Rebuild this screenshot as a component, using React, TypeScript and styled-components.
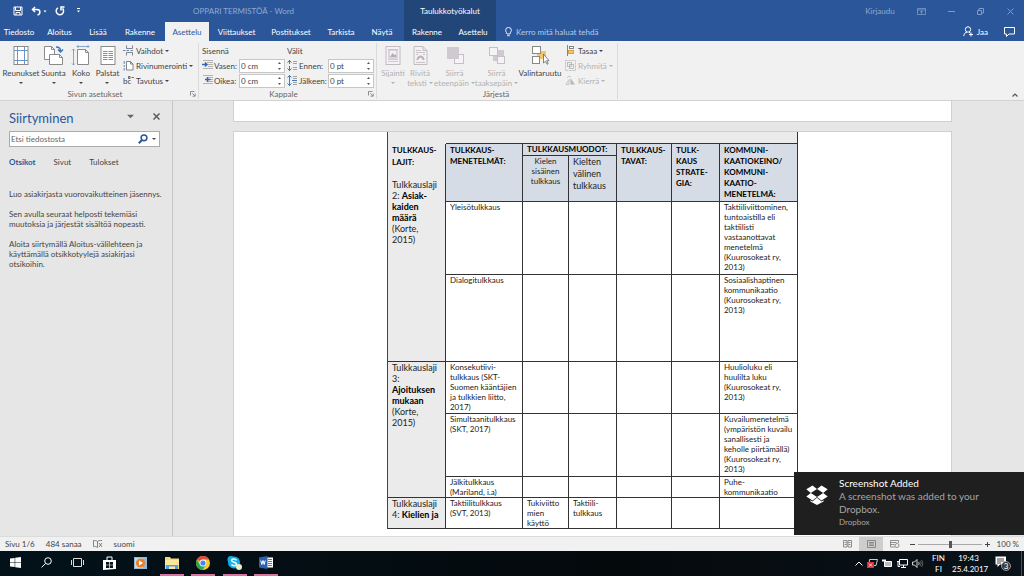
import React from "react";
import styled, { createGlobalStyle } from "styled-components";

const UI = `Lato, "Open Sans", sans-serif`;

const Global = createGlobalStyle`
  * { box-sizing: border-box; }
  html, body { margin: 0; padding: 0; }
  body { font-family: ${UI}; font-size: 8px; line-height: 10px; color: #444; overflow: hidden; }
  button, input { font: inherit; color: inherit; margin: 0; padding: 0; border: 0; background: none; }
  h1, h2, p { margin: 0; font-weight: 400; }
  svg { display: block; flex: none; }
`;

const Window = styled.div`
  display: flex;
  flex-direction: column;
  height: 100vh;
  background: #e6e6e6;
`;

/* ---------- Title bar and tabs ---------- */

const Header = styled.header`
  display: flex;
  height: 41px;
  flex: none;
  background: #2b579a;
  color: #fff;
`;

const HeaderMain = styled.div`
  display: flex;
  flex-direction: column;
  width: 404px;
  flex: none;
`;

const ContextArea = styled.div`
  display: flex;
  flex-direction: column;
  width: 92px;
  flex: none;
  background: #224678;
`;

const HeaderRest = styled.div`
  display: flex;
  flex-direction: column;
  flex: 1;
  min-width: 0;
`;

const TitleRow = styled.div<{ $end?: boolean; $center?: boolean }>`
  display: flex;
  height: 22px;
  flex: none;
  align-items: center;
  justify-content: ${(p) => (p.$end ? "flex-end" : p.$center ? "center" : "flex-start")};
  padding-right: ${(p) => (p.$end ? 4 : 0)}px;
  color: ${(p) => (p.$center ? "#fff" : "#8fa9d0")};
`;

const QuickAccess = styled.div`
  display: flex;
  align-items: center;
  gap: 8px;
  padding: 0 0 0 13px;
  flex: 1;
  color: #fff;
`;

const DocTitle = styled.h1`
  font-size: 8px;
  line-height: 10px;
  padding-right: 110px;
  white-space: pre;
`;

const IconButton = styled.button<{ $w?: number }>`
  display: flex;
  align-items: center;
  justify-content: center;
  width: ${(p) => (p.$w ? `${p.$w}px` : "auto")};
  flex: none;
`;

const Tabs = styled.nav`
  display: flex;
  height: 19px;
  align-items: stretch;
`;

const Tab = styled.button<{ $w: number; $active?: boolean }>`
  width: ${(p) => p.$w}px;
  flex: none;
  text-align: center;
  white-space: nowrap;
  background: ${(p) => (p.$active ? "#f1f1f1" : "transparent")};
  color: ${(p) => (p.$active ? "#2b579a" : "#fff")};
`;

const TellMe = styled.button`
  display: flex;
  align-items: center;
  gap: 4px;
  padding-left: 9px;
  color: #b9cae6;
  flex: 1;
`;

const ShareButton = styled.button`
  display: flex;
  align-items: center;
  gap: 4px;
  padding-right: 8px;
`;

/* ---------- Ribbon ---------- */

const Ribbon = styled.section`
  display: flex;
  height: 60px;
  flex: none;
  background: #f1f1f1;
  border-bottom: 1px solid #d2d2d2;
  padding: 2px 0 1px;
`;

const Group = styled.div<{ $w: number }>`
  display: flex;
  flex-direction: column;
  width: ${(p) => p.$w}px;
  flex: none;
  border-right: 1px solid #dadada;
`;

const GroupBody = styled.div`
  display: flex;
  height: 47px;
  padding-left: 3px;
`;

const GroupFoot = styled.div`
  display: flex;
  height: 10px;
  align-items: center;
  padding-right: 2px;
  color: #666;
`;

const GroupName = styled.span`
  flex: 1;
  text-align: center;
`;

const BigButton = styled.button<{ $w: number }>`
  display: flex;
  flex-direction: column;
  align-items: center;
  width: ${(p) => p.$w}px;
  flex: none;
  padding-top: 2px;
  white-space: nowrap;
  &:disabled { color: #b1b1b1; }
`;

const BigLabel = styled.span`
  margin-top: 2px;
  display: flex;
  flex-direction: column;
  align-items: center;
`;

const LastLine = styled.span`
  display: flex;
  align-items: center;
  justify-content: center;
  gap: 2px;
  height: 10px;
`;

const SmallColumn = styled.div<{ $pad: number }>`
  display: flex;
  flex-direction: column;
  padding-left: ${(p) => p.$pad}px;
`;

const SmallButton = styled.button`
  display: flex;
  align-items: center;
  gap: 2px;
  height: 15px;
  white-space: nowrap;
  &:disabled { color: #b1b1b1; }
`;

const FieldColumn = styled.div<{ $w: number }>`
  display: flex;
  flex-direction: column;
  width: ${(p) => p.$w}px;
  flex: none;
`;

const FieldTitle = styled.div`
  height: 15px;
  padding-top: 3px;
`;

const FieldRow = styled.div`
  display: flex;
  align-items: center;
  height: 15px;
  gap: 1px;
  padding-right: 2px;
`;

const FieldLabel = styled.label`
  flex: 1;
  min-width: 0;
  white-space: nowrap;
`;

const Spin = styled.div`
  display: flex;
  flex: none;
  align-items: center;
  width: 46px;
  height: 14px;
  background: #fff;
  border: 1px solid #c6c6c6;
  padding-right: 2px;
  input { width: 37px; padding-left: 1px; outline: none; }
`;

const Collapse = styled.div`
  display: flex;
  flex: 1;
  justify-content: flex-end;
  align-items: flex-end;
  padding: 0 6px 2px 0;
`;

/* ---------- Workspace ---------- */

const Workspace = styled.main`
  display: flex;
  flex: 1;
  min-height: 0;
`;

const Pane = styled.aside`
  width: 173px;
  flex: none;
  border-right: 1px solid #c6c6c6;
  padding: 9px 12px 0 9px;
`;

const PaneHead = styled.div`
  display: flex;
  align-items: flex-start;
  height: 21px;
`;

const PaneTitle = styled.h2`
  flex: 1;
  font-size: 13px;
  line-height: 16px;
  color: #2b579a;
`;

const PaneTools = styled.div`
  display: flex;
  align-items: center;
  gap: 19px;
  height: 13px;
`;

const SearchBox = styled.div`
  display: flex;
  align-items: center;
  gap: 4px;
  height: 16px;
  background: #fff;
  border: 1px solid #ababab;
  padding-right: 3px;
  input { flex: 1; min-width: 0; padding-left: 1px; outline: none; }
  input::placeholder { color: #666; opacity: 1; }
`;

const PaneTabs = styled.div`
  display: flex;
  gap: 18px;
  margin: 10px 0 22px;
`;

const PaneTab = styled.button<{ $active?: boolean }>`
  font-weight: ${(p) => (p.$active ? 700 : 400)};
  color: ${(p) => (p.$active ? "#2b579a" : "#444")};
`;

const PaneText = styled.p`
  margin-bottom: 10px;
  white-space: nowrap;
`;

const DocArea = styled.div`
  display: flex;
  flex-direction: column;
  align-items: center;
  flex: 1;
  min-width: 0;
  overflow: hidden;
  padding-right: 12px;
`;

const PreviousPage = styled.div`
  width: 719px;
  height: 21px;
  flex: none;
  background: #fff;
  border: 1px solid #d0d0d0;
  border-top: 0;
  margin-bottom: 9px;
`;

const Page = styled.div`
  width: 719px;
  flex: 1;
  min-height: 0;
  overflow: hidden;
  background: #fff;
  border: 1px solid #d0d0d0;
  border-bottom: 0;
  display: flex;
  justify-content: center;
  align-items: flex-start;
`;

const DocTable = styled.table`
  table-layout: fixed;
  width: 411px;
  flex: none;
  border-collapse: separate;
  border-spacing: 0;
  border-left: 1px solid #444;
  color: #222;
  th, td {
    border-right: 1px solid #333;
    border-bottom: 1px solid #333;
    padding: 0 0 0 4px;
    vertical-align: top;
    text-align: left;
    font-weight: 400;
    white-space: nowrap;
  }
`;

const Row = styled.tr<{ $h: number }>`
  height: ${(p) => p.$h}px;
`;

const StripStart = styled.td`
  background: #ebebeb;
  && { border-right: 0; border-bottom: 0; }
`;

const Strip = styled.td`
  background: #ebebeb;
`;

const HeadCell = styled.th`
  background: #d6dce5;
  color: #000;
  line-height: 11px;
  && { font-weight: 700; padding-top: ${(p) => (p.rowSpan ? 1 : 0)}px; }
`;

const SubCell = styled.th<{ $large?: boolean }>`
  background: #d6dce5;
  font-size: ${(p) => (p.$large ? 9 : 8)}px;
  line-height: ${(p) => (p.$large ? 12 : 10)}px;
  && { text-align: ${(p) => (p.$large ? "left" : "center")}; padding-left: ${(p) => (p.$large ? 4 : 0)}px; }
`;

const SideCell = styled.th`
  background: #ebebeb;
  font-size: 9px;
  line-height: 11px;
  b { color: #000; }
`;

const SideTitle = styled.b`
  display: block;
  font-size: 8px;
  line-height: 12px;
  margin-bottom: 11px;
`;

/* ---------- Status bar ---------- */

const StatusBar = styled.footer`
  display: flex;
  align-items: center;
  height: 15px;
  flex: none;
  background: #f1f1f1;
  border-top: 1px solid #dcdcdc;
  padding: 0 5px;
`;

const StatusLeft = styled.div`
  display: flex;
  align-items: center;
  gap: 11px;
  flex: 1;
`;

const ViewButton = styled.button<{ $on?: boolean }>`
  display: flex;
  align-items: center;
  justify-content: center;
  width: 24px;
  height: 14px;
  background: ${(p) => (p.$on ? "#cdcdcd" : "transparent")};
`;

const Zoom = styled.div`
  display: flex;
  align-items: center;
  gap: 3px;
  padding-left: 3px;
`;

const Slider = styled.input`
  appearance: none;
  width: 64px;
  height: 12px;
  background: linear-gradient(#a8a8a8, #a8a8a8) center / 100% 1px no-repeat;
  &::-webkit-slider-thumb {
    appearance: none;
    width: 3px;
    height: 7px;
    background: #555;
  }
`;

const Percent = styled.span`
  width: 26px;
  text-align: right;
  white-space: nowrap;
`;

/* ---------- Taskbar ---------- */

const Taskbar = styled.div`
  display: flex;
  justify-content: space-between;
  height: 25px;
  flex: none;
  background: linear-gradient(90deg, #03121a, #04090c 60%, #0a1319);
  color: #fff;
`;

const Apps = styled.div`
  display: flex;
  justify-content: space-between;
  width: 278px;
  padding-left: 3px;
`;

const AppButton = styled.button<{ $open?: boolean }>`
  display: flex;
  align-items: center;
  justify-content: center;
  width: 24px;
  border-bottom: 2px solid ${(p) => (p.$open ? "#d9739f" : "transparent")};
`;

const Tray = styled.div`
  display: flex;
  align-items: center;
  gap: 4px;
`;

const TrayText = styled.div<{ $w: number }>`
  width: ${(p) => p.$w}px;
  text-align: center;
  line-height: 11px;
`;

const Notice = styled.button`
  display: flex;
  align-items: center;
  justify-content: center;
  width: 28px;
  height: 25px;
`;

const ShowDesktop = styled.button`
  width: 3px;
  height: 25px;
  border-left: 1px solid #4a5257;
`;

/* ---------- Toast ---------- */

const Toast = styled.aside`
  position: absolute;
  right: 0;
  bottom: 41px;
  display: flex;
  gap: 11px;
  width: 230px;
  height: 63px;
  padding: 5px 12px;
  background: #1f1f1f;
  color: #a5a5a5;
  font-size: 10px;
  line-height: 13px;
`;

const ToastLogo = styled.div`
  padding-top: 8px;
`;

const ToastTitle = styled.h2`
  font-size: 10px;
  line-height: 13px;
  color: #fff;
`;

const ToastSource = styled.p`
  font-size: 8px;
  line-height: 13px;
`;

/* ---------- Small drawings ---------- */

const Caret = ({ s = 4, c = "currentColor" }: { s?: number; c?: string }) => (
  <svg width={s} height={s} viewBox="0 0 4 4"><path d="M0 1h4L2 3z" fill={c} /></svg>
);

const SpinArrows = () => (
  <svg width="5" height="10" viewBox="0 0 5 10"><path d="M1 3h3L2.500 1zM1 7h3L2.500 9z" fill="#555" /></svg>
);

const Launcher = () => (
  <svg width="6" height="6" viewBox="0 0 6 6" fill="none" stroke="#777" strokeWidth=".8"><path d="M.5 4.500v-4h4M2.300 2.300l2.500 2.500M5.200 2.500v2.700H2.500" /></svg>
);

const Big = ({ children }: { children: React.ReactNode }) => (
  <svg width="20" height="21" viewBox="0 0 20 21" fill="none" strokeWidth="1">{children}</svg>
);

const Margins = () => (
  <Big><rect x="3" y="1.500" width="14" height="18" fill="#fff" stroke="#8a8a8a" /><path d="M6.500 2v17M13.500 2v17M3 5.500h14M3 15.500h14" stroke="#6a93c8" /></Big>
);
const Orientation = () => (
  <Big>
    <path d="M.5 1.500h7l3 3v10h-10z" fill="#fff" stroke="#8a8a8a" /><path d="M7.500 1.500v3h3" stroke="#8a8a8a" />
    <path d="M5.500 9.500h10l3 3v7h-13z" fill="#fff" stroke="#8a8a8a" /><path d="M15.500 9.500v3h3" stroke="#8a8a8a" />
    <path d="M12 2c3 0 4.500 1.500 4.500 4M14 4.500l2.500 2.500L19 4.500" stroke="#3e73b9" strokeWidth="1.500" />
  </Big>
);
const Size = () => (
  <Big>
    <path d="M6.500 4.500h8l3 3v12h-11z" fill="#fff" stroke="#8a8a8a" /><path d="M14.500 4.500v3h3" stroke="#8a8a8a" />
    <path d="M6 1.500h12M7.500 0L6 1.500 7.500 3M16.500 0L18 1.500 16.500 3M2.500 4v16M1 5.500L2.500 4 4 5.500M1 18.500L2.500 20 4 18.500" stroke="#6a93c8" strokeWidth=".8" />
  </Big>
);
const Columns = () => (
  <Big>
    <rect x="3" y="1.500" width="14" height="18" fill="#fff" stroke="#8a8a8a" />
    <path d="M5 6.500h4.500M5 8.500h4.500M5 10.500h4.500M5 12.500h4.500M5 14.500h4.500M10.500 6.500H15M10.500 8.500H15M10.500 10.500H15M10.500 12.500H15M10.500 14.500H15" stroke="#6a93c8" />
  </Big>
);
const Position = () => (
  <Big>
    <rect x="3" y="1.500" width="14" height="18" fill="#f4f0f4" stroke="#c2bcc2" />
    <path d="M5 4.500h10M5 14.500h10M5 16.500h10" stroke="#d0cad0" /><rect x="6" y="5" width="8" height="8" fill="#f4f0f4" stroke="#c2bcc2" /><path d="M7 12l2.500-4 2 2 1-1 1 3z" fill="#b5afb5" />
  </Big>
);
const Wrap = () => (
  <Big>
    <path d="M4 1.500h9l4 4v14H4zM13 1.500v4h4" fill="#f4f0f4" stroke="#c2bcc2" />
    <path d="M6 5.500h5M6 7.500h9M6 17.500h9M6 9.500h2M13 9.500h2" stroke="#cac4ca" /><path d="M6.500 15c0-6 8-6 8 0h-2c0-3-4-3-4 0z" fill="#b9b3b9" />
  </Big>
);
const Forward = () => (
  <Big><rect x="9.500" y="9.500" width="9" height="9" fill="#f6f3f6" stroke="#c6c0c6" /><rect x="2" y="2" width="12" height="12" fill="#d0cad0" /></Big>
);
const Backward = () => (
  <Big><rect x="6" y="5" width="11" height="11" fill="#d0cad0" /><rect x="2.500" y="2.500" width="8" height="8" fill="#f6f3f6" stroke="#c6c0c6" /><rect x="10.500" y="11.500" width="7" height="7" fill="#f6f3f6" stroke="#c6c0c6" /></Big>
);
const Selection = () => (
  <Big>
    <rect x="7" y="6" width="9" height="8" fill="#f3c56b" /><rect x="2.500" y="1.500" width="8" height="7" fill="#fff" stroke="#888" />
    <rect x="2.500" y="11.500" width="7" height="7" fill="#fff" stroke="#888" /><path d="M13.500 9v9l2-1.700 1.500 3 1.200-.6-1.500-3H19z" fill="#fff" stroke="#666" strokeWidth=".8" />
  </Big>
);

const Sm = ({ children, w = 11 }: { children: React.ReactNode; w?: number }) => (
  <svg width={w} height="11" viewBox={`0 0 ${w} 11`} fill="none" strokeWidth=".9">{children}</svg>
);
const Breaks = () => (
  <Sm><path d="M3.500.5v3h6v-3M3.500 10.500v-3h6v3" stroke="#777" /><path d="M0 5.500h2.500M3.500 5.500H6M7.500 5.500H10" stroke="#4a7dc0" /></Sm>
);
const LineNumbers = () => (
  <Sm><path d="M3.500 1.500h4l2.500 2.500v6H3.500zM7.500 1.500V4H10" fill="#fff" stroke="#777" /><path d="M1.200 1v3M1.200 5v2M1.200 8v2.500" stroke="#4a7dc0" /></Sm>
);
const Hyphenation = () => (
  <Sm>
    <text x="0" y="9" fontSize="8" fill="#444">bc</text>
    <path d="M5.500 1.500h1.500v2H5.500z" stroke="#555" />
    <path d="M8.500 2.500H11" stroke="#2f69b3" />
  </Sm>
);
const IndentIcon = ({ left }: { left?: boolean }) => (
  <Sm><path d="M5 2.500h6M6 4.500h5M6 6.500h5M1 8.500h10M1 .5h10" stroke="#aaa" /><path d={left ? "M0 4.500h4.500M3 2.500l2 2-2 2" : "M3 4.500h5.500M5.500 2v5"} stroke="#2f69b3" strokeWidth="1.500" /></Sm>
);
const SpacingIcon = ({ after }: { after?: boolean }) => (
  <Sm><path d="M6 1.500h4M6 3.500h4M6 7.500h4M6 9.500h4" stroke="#999" /><path d={after ? "M2.500.5v10M.5 2.500l2-2 2 2M.5 8.500l2 2 2-2M5 5.500h5" : "M2.500 0v4M.5 2.500L2.500.5l2 2M2.500 11V6M.5 8.500l2 2 2-2"} stroke="#2f69b3" /></Sm>
);
const AlignIcon = () => (
  <Sm><path d="M2.500 0v11" stroke="#777" /><rect x="4.500" y="1.500" width="4" height="2" fill="#fff" stroke="#777" /><rect x="3.500" y="5.500" width="5" height="3" fill="#f3c56b" stroke="#d99a3a" /></Sm>
);
const GroupIcon = () => (
  <Sm><rect x=".5" y=".5" width="10" height="10" stroke="#b8b8b8" strokeDasharray="2 1" /><rect x="2.500" y="2.500" width="4" height="4" stroke="#b8b8b8" /><rect x="4.500" y="4.500" width="4" height="4" stroke="#b8b8b8" /></Sm>
);
const RotateIcon = () => (
  <Sm><path d="M5.500 9.500V3l4.500 6.500z" fill="#b8b8b8" /><path d="M4 9.500V4.500L1 9.500zM2 3c1-2 3-2 4-1" stroke="#c2c2c2" /></Sm>
);

const Dropbox = () => (
  <svg width="22" height="20" viewBox="0 0 22 20" fill="#fff">
    <path d="M6.500.5L11 4 4.800 8 .3 4.300zM15.500.5L11 4l6.200 4 4.500-3.700zM.3 11.600L4.800 8 11 12l-4.500 3.600zM21.700 11.600L17.200 8 11 12l4.500 3.600zM11 12.800l4.600 3.700 2-1.300v1.300L11 20l-6.600-3.500v-1.300l2 1.300z" />
  </svg>
);

/* ---------- Pieces ---------- */

const Lines = ({ t }: { t: string }) => (
  <>{t.split("|").map((l, i) => <React.Fragment key={i}>{i > 0 && <br />}{l}</React.Fragment>)}</>
);

const RibbonBig = ({ w, icon, a, b, arrow = true, off }: { w: number; icon: React.ReactNode; a: string; b?: string; arrow?: boolean; off?: boolean }) => (
  <BigButton $w={w} disabled={off}>
    {icon}
    <BigLabel>
      <span>{a}</span>
      <LastLine>{b}{arrow && <Caret />}</LastLine>
    </BigLabel>
  </BigButton>
);

const Field = ({ id, icon, label, value }: { id: string; icon: React.ReactNode; label: string; value: string }) => (
  <FieldRow>
    {icon}
    <FieldLabel htmlFor={id}>{label}</FieldLabel>
    <Spin><input id={id} defaultValue={value} /><SpinArrows /></Spin>
  </FieldRow>
);

const mainTabs: [string, number, boolean?][] = [
  ["Tiedosto", 38], ["Aloitus", 43], ["Lisää", 34], ["Rakenne", 50], ["Asettelu", 44, true],
  ["Viittaukset", 55], ["Postitukset", 54], ["Tarkista", 46], ["Näytä", 36],
];

const colWidths = [58, 77, 46, 48, 55, 48, 78];

const BodyCells = ({ cells }: { cells: string[] }) => (
  <>{cells.map((c, i) => <td key={i}><Lines t={c} /></td>)}</>
);

export default function App() {
  return (
    <Window>
      <Global />
      <Header>
        <HeaderMain>
          <TitleRow>
            <QuickAccess>
              <IconButton aria-label="Tallenna">
                <svg width="10" height="10" viewBox="0 0 10 10" fill="none" stroke="#fff"><path d="M1 1h8v8H1zM2.500 1v3.500h5V1M3 9V6.500h4V9" /></svg>
              </IconButton>
              <IconButton aria-label="Kumoa">
                <svg width="16" height="10" viewBox="0 0 16 10" fill="none" stroke="#fff" strokeWidth="1.500"><path d="M4 1L1.500 3.500 4 6M1.500 3.500H6c4 0 3.500 5 .5 5.500" /><path d="M12.500 4.500h3l-1.500 2z" fill="#fff" stroke="none" /></svg>
              </IconButton>
              <IconButton aria-label="Toista">
                <svg width="10" height="10" viewBox="0 0 10 10" fill="none" stroke="#fff" strokeWidth="1.500"><path d="M3 1.800a3.700 3.700 0 1 0 4.500.6M9.500 1H6v3.500" /></svg>
              </IconButton>
              <IconButton $w={10} aria-label="Mukauta">
                <svg width="5" height="6" viewBox="0 0 5 6"><path d="M1 0h3v1H1zM1 2.500h3l-1.500 2z" fill="#fff" /></svg>
              </IconButton>
            </QuickAccess>
            <DocTitle>OPPARI TERMISTÖÄ - Word</DocTitle>
          </TitleRow>
          <Tabs>
            {mainTabs.map(([n, w, on]) => <Tab key={n} $w={w} $active={on}>{n}</Tab>)}
          </Tabs>
        </HeaderMain>
        <ContextArea>
          <TitleRow $center>Taulukkotyökalut</TitleRow>
          <Tabs><Tab $w={46}>Rakenne</Tab><Tab $w={46}>Asettelu</Tab></Tabs>
        </ContextArea>
        <HeaderRest>
          <TitleRow $end>
            <IconButton $w={40}>Kirjaudu</IconButton>
            <IconButton $w={42} aria-label="Valintanauha"><svg width="9" height="7" viewBox="0 0 9 7" fill="none" stroke="#7f9bc6" strokeWidth=".8"><path d="M.5.5h8v6h-8zM.5 2h8M4.500 6V3M3 4.300L4.500 3 6 4.300" /></svg></IconButton>
            <IconButton $w={18} aria-label="Pienennä"><svg width="7" height="7" viewBox="0 0 7 7" stroke="#7f9bc6"><path d="M0 3.500h7" /></svg></IconButton>
            <IconButton $w={40} aria-label="Palauta"><svg width="7" height="7" viewBox="0 0 7 7" fill="none" stroke="#7f9bc6"><path d="M.5 2.500h4v4h-4zM2 2V.5h4.500V5H5" /></svg></IconButton>
            <IconButton $w={20} aria-label="Sulje"><svg width="7" height="7" viewBox="0 0 7 7" stroke="#7f9bc6"><path d="M.5.5l6 6M6.500.5l-6 6" /></svg></IconButton>
          </TitleRow>
          <Tabs>
            <TellMe>
              <svg width="7" height="10" viewBox="0 0 7 10" fill="none" stroke="#fff" strokeWidth=".9"><path d="M2 7C2 5.500.6 5 .6 3.300a2.900 2.900 0 0 1 5.800 0C6.400 5 5 5.500 5 7zM2.200 8.700h2.600" /></svg>
              Kerro mitä haluat tehdä
            </TellMe>
            <ShareButton>
              <svg width="10" height="11" viewBox="0 0 10 11" fill="none" stroke="#fff"><circle cx="5" cy="3.500" r="2.700" /><path d="M.8 10C1 7.500 2.500 6.300 4 6.200M6 6.200l1.500 1M8 6.500v4M6 8.500h4" /></svg>
              Jaa
            </ShareButton>
            <IconButton $w={28} aria-label="Kommentit">
              <svg width="12" height="10" viewBox="0 0 12 10" fill="none" stroke="#fff"><path d="M.5.500h10v6.500H5L2.500 9.500V7h-2z" /></svg>
            </IconButton>
          </Tabs>
        </HeaderRest>
      </Header>

      <Ribbon>
        <Group $w={199}>
          <GroupBody>
            <RibbonBig w={36} icon={<Margins />} a="Reunukset" />
            <RibbonBig w={29} icon={<Orientation />} a="Suunta" />
            <RibbonBig w={26} icon={<Size />} a="Koko" />
            <RibbonBig w={27} icon={<Columns />} a="Palstat" />
            <SmallColumn $pad={2}>
              <SmallButton><Breaks />Vaihdot<Caret /></SmallButton>
              <SmallButton><LineNumbers />Rivinumerointi<Caret /></SmallButton>
              <SmallButton><Hyphenation />Tavutus<Caret /></SmallButton>
            </SmallColumn>
          </GroupBody>
          <GroupFoot><GroupName>Sivun asetukset</GroupName><Launcher /></GroupFoot>
        </Group>
        <Group $w={178}>
          <GroupBody>
            <FieldColumn $w={85}>
              <FieldTitle>Sisennä</FieldTitle>
              <Field id="left" icon={<IndentIcon left />} label="Vasen:" value="0 cm" />
              <Field id="right" icon={<IndentIcon />} label="Oikea:" value="0 cm" />
            </FieldColumn>
            <FieldColumn $w={89}>
              <FieldTitle>Välit</FieldTitle>
              <Field id="before" icon={<SpacingIcon />} label="Ennen:" value="0 pt" />
              <Field id="after" icon={<SpacingIcon after />} label="Jälkeen:" value="0 pt" />
            </FieldColumn>
          </GroupBody>
          <GroupFoot><GroupName>Kappale</GroupName><Launcher /></GroupFoot>
        </Group>
        <Group $w={241}>
          <GroupBody>
            <RibbonBig w={26} icon={<Position />} a="Sijainti" off />
            <RibbonBig w={28} icon={<Wrap />} a="Rivitä" b="teksti" off />
            <RibbonBig w={41} icon={<Forward />} a="Siirrä" b="eteenpäin" off />
            <RibbonBig w={43} icon={<Backward />} a="Siirrä" b="taaksepäin" off />
            <RibbonBig w={44} icon={<Selection />} a="Valintaruutu" arrow={false} />
            <SmallColumn $pad={3}>
              <SmallButton><AlignIcon />Tasaa<Caret /></SmallButton>
              <SmallButton disabled><GroupIcon />Ryhmitä<Caret /></SmallButton>
              <SmallButton disabled><RotateIcon />Kierrä<Caret /></SmallButton>
            </SmallColumn>
          </GroupBody>
          <GroupFoot><GroupName>Järjestä</GroupName></GroupFoot>
        </Group>
        <Collapse>
          <IconButton aria-label="Tiivistä"><svg width="6" height="4" viewBox="0 0 6 4" fill="none" stroke="#555" strokeWidth="1.200"><path d="M.5 3.500L3 1l2.500 2.500" /></svg></IconButton>
        </Collapse>
      </Ribbon>

      <Workspace>
        <Pane>
          <PaneHead>
            <PaneTitle>Siirtyminen</PaneTitle>
            <PaneTools>
              <IconButton aria-label="Asetukset"><Caret s={7} c="#666" /></IconButton>
              <IconButton aria-label="Sulje ruutu"><svg width="7" height="7" viewBox="0 0 7 7" stroke="#555" strokeWidth="1.400"><path d="M.5.5l6 6M6.500.5l-6 6" /></svg></IconButton>
            </PaneTools>
          </PaneHead>
          <SearchBox>
            <input aria-label="Etsi tiedostosta" placeholder="Etsi tiedostosta" />
            <svg width="10" height="10" viewBox="0 0 10 10" fill="none" stroke="#2b579a" strokeWidth="1.500"><circle cx="6" cy="3.800" r="2.900" /><path d="M4 6L.8 9.200" strokeWidth="2" /></svg>
            <Caret />
          </SearchBox>
          <PaneTabs>
            <PaneTab $active>Otsikot</PaneTab><PaneTab>Sivut</PaneTab><PaneTab>Tulokset</PaneTab>
          </PaneTabs>
          <PaneText>Luo asiakirjasta vuorovaikutteinen jäsennys.</PaneText>
          <PaneText><Lines t="Sen avulla seuraat helposti tekemiäsi|muutoksia ja järjestät sisältöä nopeasti." /></PaneText>
          <PaneText><Lines t="Aloita siirtymällä Aloitus-välilehteen ja|käyttämällä otsikkotyylejä asiakirjasi|otsikoihin." /></PaneText>
        </Pane>

        <DocArea>
          <PreviousPage />
          <Page>
            <DocTable>
              <colgroup>{colWidths.map((w, i) => <col key={i} style={{ width: w }} />)}</colgroup>
              <tbody>
                <Row $h={12}><StripStart /><Strip colSpan={6} /></Row>
                <Row $h={12}>
                  <SideCell rowSpan={4}>
                    <SideTitle>TULKKAUS-<br />LAJIT:</SideTitle>
                    Tulkkauslaji<br />2: <b>Asiak-<br />kaiden<br />määrä</b><br />(Korte,<br />2015)
                  </SideCell>
                  <HeadCell rowSpan={2}><Lines t="TULKKAUS-|MENETELMÄT:" /></HeadCell>
                  <HeadCell colSpan={2}>TULKKAUSMUODOT:</HeadCell>
                  <HeadCell rowSpan={2}><Lines t="TULKKAUS-|TAVAT:" /></HeadCell>
                  <HeadCell rowSpan={2}><Lines t="TULK-|KAUS|STRATE-|GIA:" /></HeadCell>
                  <HeadCell rowSpan={2}><Lines t="KOMMUNI-|KAATIOKEINO/|KOMMUNI-|KAATIO-|MENETELMÄ:" /></HeadCell>
                </Row>
                <Row $h={46}>
                  <SubCell><Lines t="Kielen|sisäinen|tulkkaus" /></SubCell>
                  <SubCell $large><Lines t="Kielten|välinen|tulkkaus" /></SubCell>
                </Row>
                <Row $h={73}><BodyCells cells={["Yleisötulkkaus", "", "", "", "", "Taktiiliviittominen,|tuntoaistilla  eli|taktiilisti|vastaanottavat|menetelmä|(Kuurosokeat ry,|2013)"]} /></Row>
                <Row $h={87}><BodyCells cells={["Dialogitulkkaus", "", "", "", "", "Sosiaalishaptinen|kommunikaatio|(Kuurosokeat ry,|2013)"]} /></Row>
                <Row $h={52}>
                  <SideCell rowSpan={3}>Tulkkauslaji<br />3:<br /><b>Ajoituksen<br />mukaan</b><br />(Korte,<br />2015)</SideCell>
                  <BodyCells cells={["Konsekutiivi-|tulkkaus (SKT-|Suomen kääntäjien|ja tulkkien liitto,|2017)", "", "", "", "", "Huulioluku eli|huulilta luku|(Kuurosokeat ry,|2013)"]} />
                </Row>
                <Row $h={63}><BodyCells cells={["Simultaanitulkkaus|(SKT, 2017)", "", "", "", "", "Kuvailumenetelmä|(ympäristön kuvailu|sanallisesti ja|keholle piirtämällä)|(Kuurosokeat ry,|2013)"]} /></Row>
                <Row $h={21}><BodyCells cells={["Jälkitulkkaus|(Mariland, i.a)", "", "", "", "", "Puhe-|kommunikaatio"]} /></Row>
                <Row $h={31}>
                  <SideCell>Tulkkauslaji<br />4: <b>Kielien ja</b></SideCell>
                  <BodyCells cells={["Taktiilitulkkaus|(SVT, 2013)", "Tukiviitto|mien|käyttö", "Taktiili-|tulkkaus", "", "", ""]} />
                </Row>
              </tbody>
            </DocTable>
          </Page>
        </DocArea>
      </Workspace>

      <StatusBar>
        <StatusLeft>
          <span>Sivu 1/6</span>
          <span>484 sanaa</span>
          <svg width="10" height="8" viewBox="0 0 10 8" fill="none" stroke="#666" strokeWidth=".8"><path d="M4.500 7.500C3 6.500 2 6.500.5 6.500v-6c1.500 0 2.500 0 4 1zM4.500 1.500c1-1 2-1 4.500-1M6 3l3 4M9 3L6 7" /></svg>
          <span>suomi</span>
        </StatusLeft>
        <ViewButton aria-label="Lukutila"><svg width="9" height="8" viewBox="0 0 9 8" fill="none" stroke="#777" strokeWidth=".8"><path d="M.5.500h3.500v6.500H.5zM5 .5h3.500V7H5zM1.500 2.500h2M1.500 4.500h2M5.500 2.500h2M5.500 4.500h2" /></svg></ViewButton>
        <ViewButton $on aria-label="Tulostusasettelu"><svg width="9" height="8" viewBox="0 0 9 8" fill="none" stroke="#777" strokeWidth=".8"><path d="M.5.500h8v7h-8zM2 2.500h5M2 4h5M2 5.500h5" /></svg></ViewButton>
        <ViewButton aria-label="Verkkoasettelu"><svg width="10" height="8" viewBox="0 0 10 8" fill="none" stroke="#777" strokeWidth=".8"><path d="M5 7H.5V.500h8V3M.5 2.500h6M.5 4.500h4" /><circle cx="7" cy="5.500" r="2" /></svg></ViewButton>
        <Zoom>
          <IconButton aria-label="Loitonna"><svg width="5" height="5" viewBox="0 0 5 5" stroke="#444"><path d="M0 2.500h5" /></svg></IconButton>
          <Slider type="range" aria-label="Zoomaus" defaultValue={50} />
          <IconButton aria-label="Lähennä"><svg width="5" height="5" viewBox="0 0 5 5" stroke="#444"><path d="M0 2.500h5M2.500 0v5" /></svg></IconButton>
          <Percent>100 %</Percent>
        </Zoom>
      </StatusBar>

      <Taskbar>
        <Apps>
          <AppButton aria-label="Käynnistä"><svg width="11" height="11" viewBox="0 0 11 11" fill="#fff"><path d="M0 1.600l4.700-.7v4.300H0zM5.200.8L11 0v5.200H5.200zM0 5.700h4.700V10L0 9.400zM5.200 5.700H11V11l-5.800-.8z" /></svg></AppButton>
          <AppButton aria-label="Haku"><svg width="11" height="11" viewBox="0 0 11 11" fill="none" stroke="#fff"><circle cx="7" cy="4" r="3.300" /><path d="M4.600 6.400L.6 10.400" /></svg></AppButton>
          <AppButton aria-label="Tehtävänäkymä"><svg width="13" height="9" viewBox="0 0 13 9" fill="none" stroke="#ddd"><path d="M2.500.5h8v8h-8zM.5 2v5M12.500 2v5" /></svg></AppButton>
          <AppButton aria-label="Kauppa"><svg width="13" height="14" viewBox="0 0 13 14"><path d="M0 4h13v9L0 14z" fill="#fff" /><path d="M4 4V1h5v3" fill="none" stroke="#fff" /><path d="M3 6h3v2.700H3zM6.700 6H10v2.700H6.700zM3 9.300h3V12H3zM6.700 9.300H10V12H6.700z" fill="#06141b" /></svg></AppButton>
          <AppButton aria-label="Mediasoitin"><svg width="13" height="12" viewBox="0 0 13 12"><rect width="13" height="12" fill="#8fb9d6" /><rect x="1" y="1" width="8" height="10" fill="#c6dceb" /><circle cx="6.500" cy="6" r="4.600" fill="#e8812c" /><path d="M5 3.500v5L9 6z" fill="#fff" /></svg></AppButton>
          <AppButton $open aria-label="Resurssienhallinta"><svg width="14" height="12" viewBox="0 0 14 12"><path d="M0 0h5l1 1.500h8V12H0z" fill="#f5d77b" /><path d="M1 7h12v5H1z" fill="#4da3d8" /><path d="M0 3h14v5H0z" fill="#fbe79c" /><path d="M4 9.500h6V12H4z" fill="#fbe79c" /></svg></AppButton>
          <AppButton $open aria-label="Chrome"><svg width="14" height="14" viewBox="0 0 14 14"><circle cx="7" cy="7" r="7" fill="#f7c92f" /><path d="M7 7L.9 3.500A7 7 0 0 1 13.100 3.500H7z" fill="#dd4b3e" /><path d="M.9 3.500A7 7 0 0 0 6.500 14L10 8.700 7 10 4 8.700z" fill="#2ea25a" /><circle cx="7" cy="7" r="3.400" fill="#fff" /><circle cx="7" cy="7" r="2.600" fill="#4285f4" /></svg></AppButton>
          <AppButton $open aria-label="Skype"><svg width="15" height="14" viewBox="0 0 15 14"><circle cx="7" cy="6.500" r="6" fill="#17aee9" /><circle cx="4" cy="3.500" r="3.500" fill="#17aee9" /><path d="M9.500 4.300C8.500 2.500 4.600 2.600 4.700 4.600c.1 2 4.800 1.300 4.800 3.500C9.500 10.200 5.500 10.200 4.500 8.400" fill="none" stroke="#fff" strokeWidth="1.500" /><circle cx="12" cy="11" r="3" fill="#e5f3c9" /></svg></AppButton>
          <AppButton $open aria-label="Word"><svg width="14" height="13" viewBox="0 0 14 13"><path d="M7 1.500h7v10H7z" fill="#fff" /><path d="M9 3.500h4M9 5.500h4M9 7.500h4M9 9.500h4" stroke="#2b579a" strokeWidth=".8" /><path d="M0 1.500L8.500 0v13L0 11.500z" fill="#2b5fb0" /><path d="M1.800 4.500l1 4 1.200-4 1.200 4 1-4" fill="none" stroke="#fff" /></svg></AppButton>
        </Apps>
        <Tray>
          <svg width="8" height="5" viewBox="0 0 8 5" fill="none" stroke="#fff"><path d="M.5 4.500L4 1l3.500 3.500" /></svg>
          <svg width="11" height="9" viewBox="0 0 11 9" fill="none" stroke="#ccc"><path d="M2.500.5h8L9 6.500H2z" /><rect y="3" width="7" height="6" fill="#d8323c" stroke="none" /><path d="M2 4.500l3 3M5 4.500l-3 3" stroke="#fff" strokeWidth=".8" /></svg>
          <svg width="11" height="9" viewBox="0 0 11 9" fill="none" stroke="#fff"><path d="M2.500 2.500h7v5h-7z" fill="#bbb" /><path d="M0 1.500h4M1 0v3M3 0v3" /></svg>
          <svg width="11" height="9" viewBox="0 0 11 9" fill="none" stroke="#fff"><path d="M2.500.5h8v5.500h-8zM6.500 6v2.500M4 8.500h5M0 2.500h2.500M1 2.500v5h2" /></svg>
          <svg width="13" height="9" viewBox="0 0 13 9" fill="none" stroke="#fff" strokeWidth=".8"><path d="M.5 3h2L5 .5v8L2.500 6h-2z" /><path d="M6.500 3c.8 1 .8 2 0 3" /><path d="M8 2c1.300 1.600 1.300 3.400 0 5M9.500 1c1.600 2.300 1.600 4.700 0 7" stroke="#777" /></svg>
          <TrayText $w={19}>FIN<br />FI</TrayText>
          <TrayText $w={33}>19:43<br />25.4.2017</TrayText>
          <Notice aria-label="Ilmoitukset"><svg width="16" height="15" viewBox="0 0 16 15"><path d="M.5.500h10.500v8H5L2.500 11V8.500h-2z" fill="#fff" /><path d="M2 3h7M2 5h7M2 7h4" stroke="#111" strokeWidth=".8" /><circle cx="11" cy="10" r="4.500" fill="#3a3a3a" stroke="#aaa" strokeWidth=".8" /><text x="11" y="13" fontSize="8" fill="#fff" textAnchor="middle">3</text></svg></Notice>
          <ShowDesktop aria-label="Näytä työpöytä" />
        </Tray>
      </Taskbar>

      <Toast>
        <ToastLogo><Dropbox /></ToastLogo>
        <div>
          <ToastTitle>Screenshot Added</ToastTitle>
          <p>A screenshot was added to your<br />Dropbox.</p>
          <ToastSource>Dropbox</ToastSource>
        </div>
      </Toast>
    </Window>
  );
}
